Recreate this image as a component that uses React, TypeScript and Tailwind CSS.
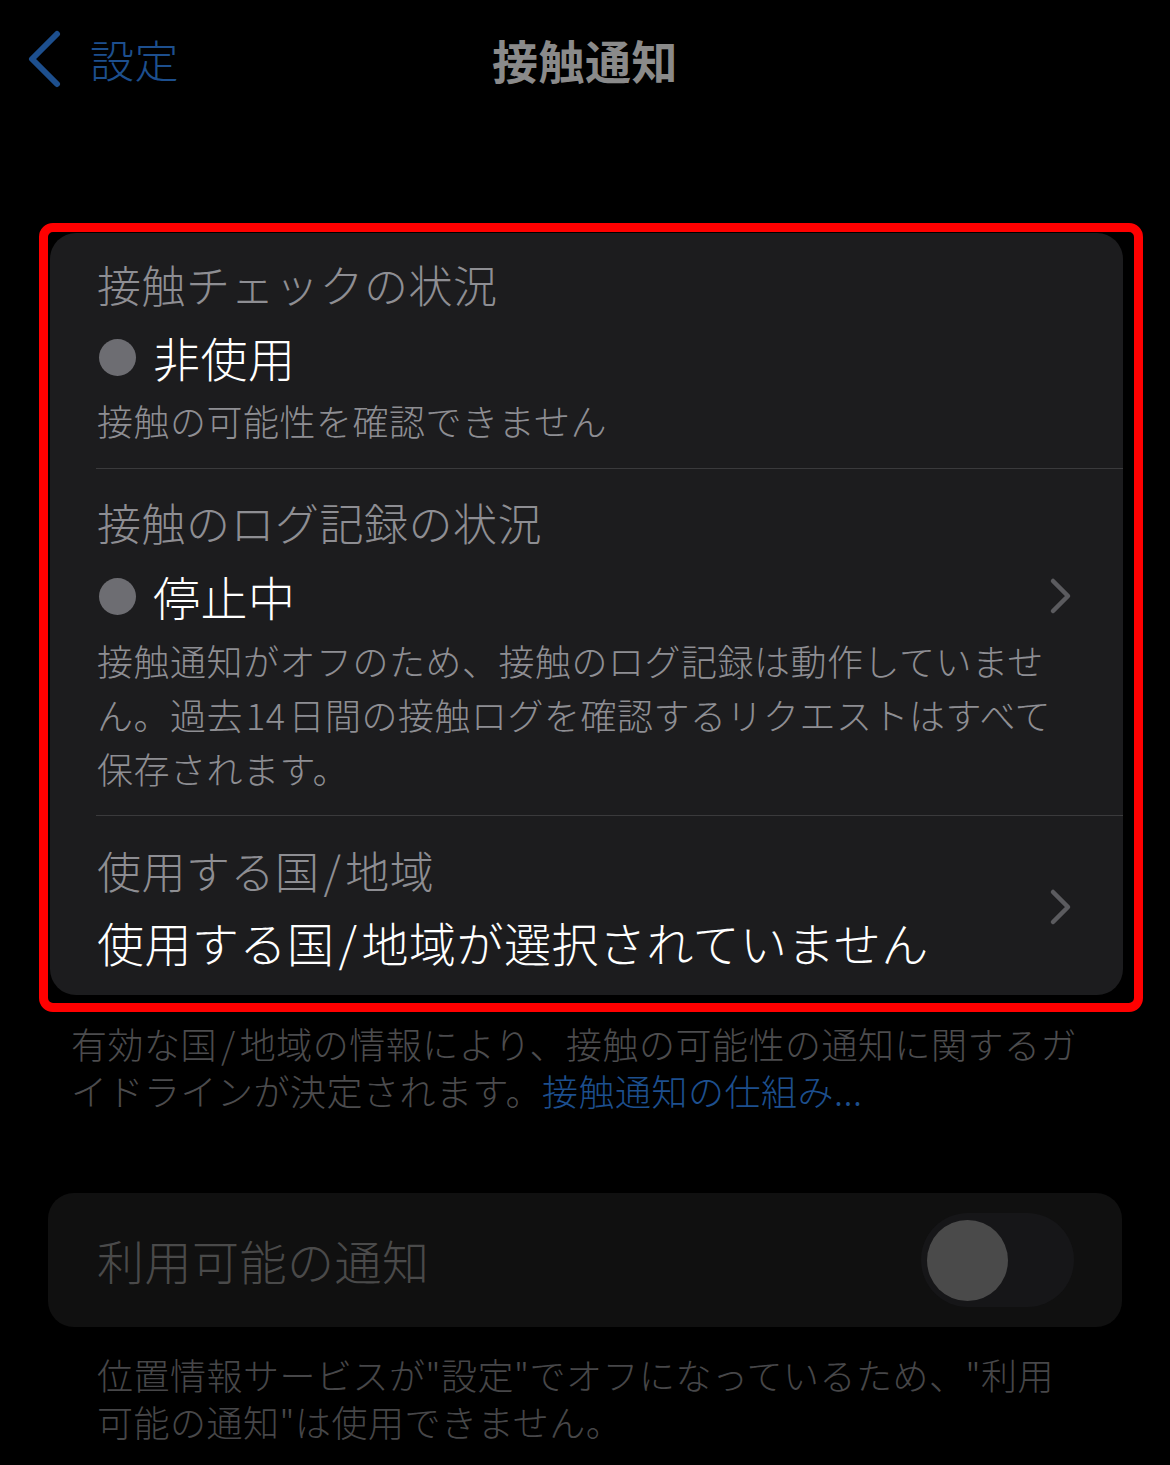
import React from "react";

const Chevron = () => (
  <svg width="24" height="38" viewBox="0 0 24 38" fill="none">
    <path
      d="M4 4 L19 19 L4 34"
      stroke="#5b5b5f"
      strokeWidth="4.5"
      strokeLinecap="round"
      strokeLinejoin="round"
    />
  </svg>
);

const StatusDot = () => (
  <div className="ml-[2px] h-[37px] w-[37px] shrink-0 rounded-full bg-[#6d6d72]" />
);

// the slash in "国/地域" sits with a little air on both sides
const Slash = () => <span className="px-[4px]">/</span>;

const App = () => {
  return (
    <div className="min-h-[1465px] w-full bg-black font-['Noto_Sans_CJK_JP','Noto_Sans',sans-serif] font-light tracking-[0.5px]">
      {/* nav bar */}
      <div className="grid h-[118px] grid-cols-[1fr_auto_1fr] items-center">
        <div className="flex items-center gap-[24px] pl-[26px]">
          <svg width="40" height="58" viewBox="0 0 40 58" fill="none">
            <path
              d="M31 4 L6 29 L31 54"
              stroke="#1d4f8e"
              strokeWidth="6"
              strokeLinecap="round"
              strokeLinejoin="round"
            />
          </svg>
          <span className="text-[44px] leading-[52px] text-[#1d4f8e]">設定</span>
        </div>
        <h1 className="text-[46px] font-bold leading-[56px] text-[#8a8a8a]">接触通知</h1>
        <div />
      </div>

      {/* highlighted group */}
      <div className="ml-[39px] mt-[105px] w-[1104px] rounded-[14px] border-[9px] border-[#ff0000] pb-[8px] pl-[2px] pr-[11px] pt-[1px]">
        <div className="rounded-[26px] bg-[#1c1c1e]">
          {/* row 1 */}
          <div className="pb-[24px] pl-[47px] pt-[25px]">
            <div className="text-[44px] leading-[52px] text-[#8e8e93]">接触チェックの状況</div>
            <div className="mt-[19px] flex items-center gap-[17px]">
              <StatusDot />
              <span className="text-[47px] leading-[56px] text-white">非使用</span>
            </div>
            <div className="mt-[11px] text-[36px] leading-[48px] text-[#8e8e93]">
              接触の可能性を確認できません
            </div>
          </div>
          <div className="ml-[46px] h-px bg-[#3a3a3c]" />

          {/* row 2 */}
          <div className="pb-[20px] pl-[47px] pr-[50px] pt-[27px]">
            <div className="text-[44px] leading-[52px] text-[#8e8e93]">接触のログ記録の状況</div>
            <div className="mt-[20px] flex items-center justify-between">
              <div className="flex items-center gap-[17px]">
                <StatusDot />
                <span className="text-[47px] leading-[56px] text-white">停止中</span>
              </div>
              <Chevron />
            </div>
            <div className="mt-[9px] whitespace-nowrap text-[36px] leading-[54px] text-[#8e8e93]">
              接触通知がオフのため、接触のログ記録は動作していませ
              <br />
              ん。過去<span className="px-[3px]">14</span>日間の接触ログを確認するリクエストはすべて
              <br />
              保存されます。
            </div>
          </div>
          <div className="ml-[46px] h-px bg-[#3a3a3c]" />

          {/* row 3 */}
          <div className="flex items-center justify-between pb-[25px] pl-[47px] pr-[50px] pt-[28px]">
            <div>
              <div className="text-[44px] leading-[52px] text-[#8e8e93]">
                使用する国<Slash />地域
              </div>
              <div className="mt-[18px] text-[47px] leading-[56px] text-white">
                使用する国<Slash />地域が選択されていません
              </div>
            </div>
            <Chevron />
          </div>
        </div>
      </div>

      <p className="mt-[8px] whitespace-nowrap pl-[71px] text-[36px] leading-[47px] text-[#4c4c4e]">
        有効な国<Slash />地域の情報により、接触の可能性の通知に関するガ
        <br />
        イドラインが決定されます。
        <span className="text-[#1d4f8e]">接触通知の仕組み...</span>
      </p>

      {/* disabled toggle row */}
      <div className="ml-[48px] mt-[79px] flex h-[134px] w-[1074px] items-center justify-between rounded-[26px] bg-[#101010] pl-[49px] pr-[48px]">
        <span className="text-[47px] leading-[56px] text-[#4a4a4a]">利用可能の通知</span>
        <div className="flex h-[94px] w-[153px] items-center rounded-full bg-[#161618] px-[6px]">
          <div className="h-[81px] w-[81px] rounded-full bg-[#4a4a4a]" />
        </div>
      </div>

      <p className="mt-[24px] whitespace-nowrap pl-[97px] text-[36px] leading-[47px] text-[#474749]">
        位置情報サービスが"設定"でオフになっているため、"利用
        <br />
        可能の通知"は使用できません。
      </p>
    </div>
  );
};

export default App;
